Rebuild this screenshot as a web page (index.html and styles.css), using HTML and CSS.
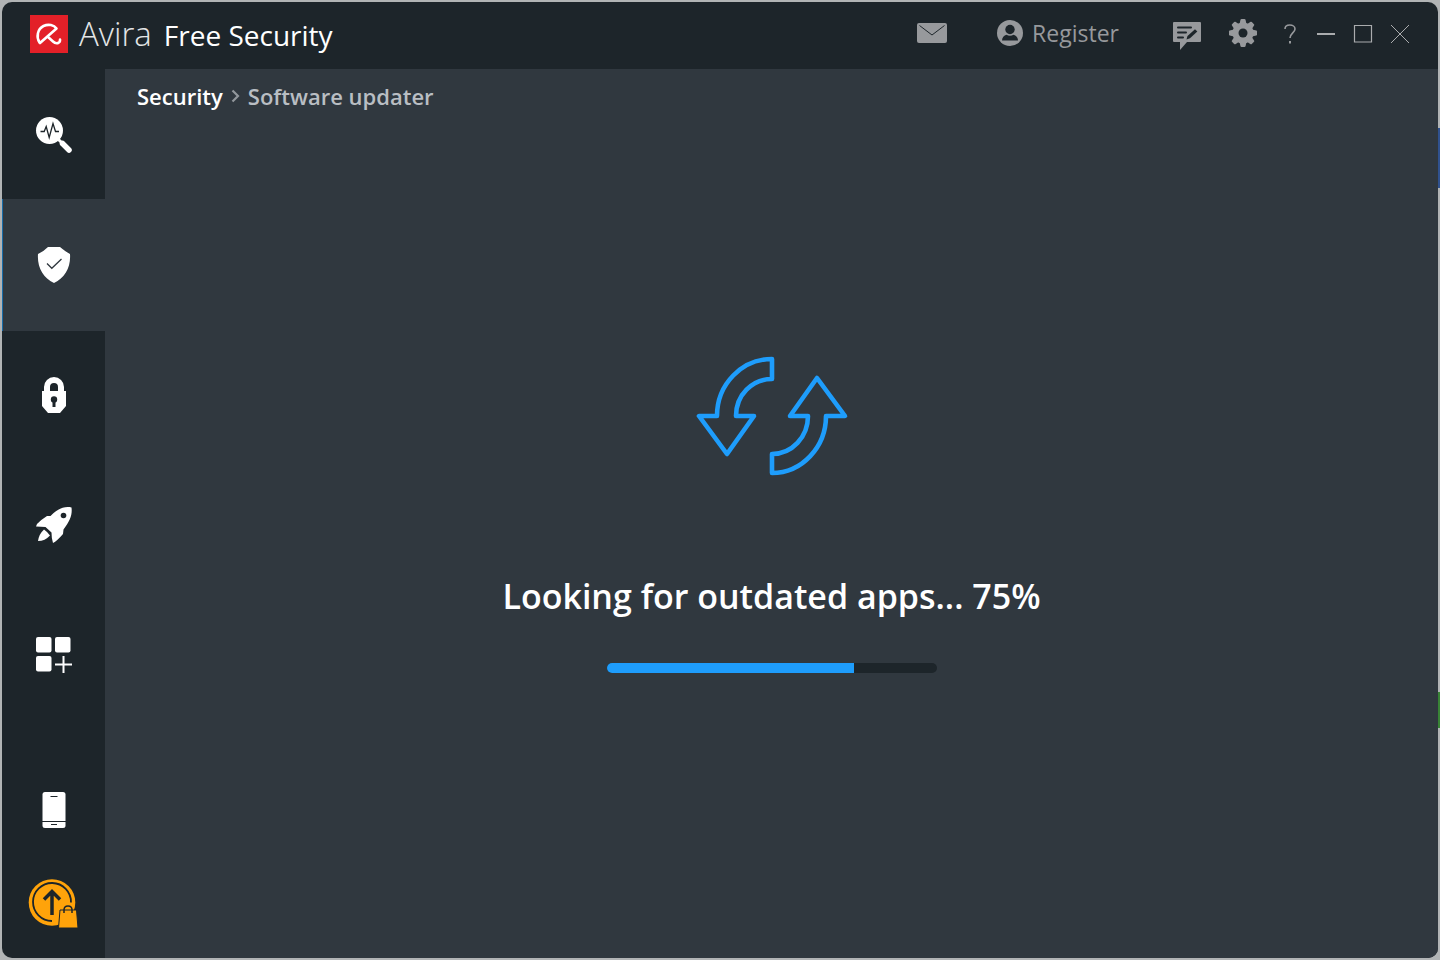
FILE: index.html
```html
<!DOCTYPE html>
<html lang="en">
<head>
<meta charset="utf-8">
<meta name="viewport" content="width=device-width, initial-scale=1">
<title>Avira Free Security</title>
<link rel="stylesheet" href="styles.css">
</head>
<body>
<div class="window">
  <header class="titlebar">
    <div class="brand">
      <svg class="brand-logo" viewBox="0 0 38 38" aria-hidden="true">
        <path fill="#e32028" d="M0 0h38v38H0z"/>
        <path fill="none" stroke="#fff" stroke-width="2.600" stroke-linecap="round" stroke-linejoin="round" d="M9.500 27.500C6 22 7.500 14 13.500 11C18.500 8.700 24 10 26.500 13.500L10 28M17.500 21.500L23 26.500C26 29.500 30.500 28.500 30 24.500"/>
      </svg>
      <span class="brand-name">Avira</span>
      <span class="brand-product">Free Security</span>
    </div>
    <div class="account">
      <button class="tool" type="button" aria-label="Messages">
        <svg width="30" height="20" viewBox="0 0 30 20"><rect width="30" height="20" rx="2" fill="#97999c"/><path d="M2.500 2.500L15 12L27.500 2.500" fill="none" stroke="#1d252a" stroke-width="1"/></svg>
      </button>
      <button class="tool register" type="button">
        <svg width="26" height="26" viewBox="0 0 26 26"><circle cx="13" cy="13" r="13" fill="#97999c"/><circle cx="13" cy="9.500" r="4.700" fill="#1d252a"/><path d="M5 20.500c0-3 2-5.200 4.500-5.800 2 1.500 5 1.500 7 0 2.500.6 4.500 2.800 4.500 5.800z" fill="#1d252a"/></svg>
        <span>Register</span>
      </button>
    </div>
    <div class="tools">
      <button class="tool" type="button" aria-label="Feedback">
        <svg width="28" height="34" viewBox="0 -6 28 34"><path d="M1 0h26a1 1 0 0 1 1 1v18a1 1 0 0 1-1 1H14l-7 8v-8H1a1 1 0 0 1-1-1V1a1 1 0 0 1 1-1z" fill="#97999c"/><path d="M5 5.500h13M5 10.500h8M5 15.500h5" stroke="#1d252a" stroke-width="2" stroke-linecap="round"/><path d="M13.500 17.500l1-3.500 7.500-6.800 2.300 2.300-7.300 6.800z" fill="#1d252a"/></svg>
      </button>
      <button class="tool" type="button" aria-label="Settings">
        <svg width="28" height="28" viewBox="-14 -14 28 28"><g fill="#97999c"><circle r="10.500"/><path id="tooth" d="M-3.500-9l1-4.300q.2-.7 1-.7h3q.8 0 1 .7l1 4.300z"/><use href="#tooth" transform="rotate(45)"/><use href="#tooth" transform="rotate(90)"/><use href="#tooth" transform="rotate(135)"/><use href="#tooth" transform="rotate(180)"/><use href="#tooth" transform="rotate(225)"/><use href="#tooth" transform="rotate(270)"/><use href="#tooth" transform="rotate(315)"/></g><circle r="4.500" fill="#1d252a"/></svg>
      </button>
    </div>
    <div class="controls">
      <button class="tool help" type="button" aria-label="Help">
        <svg width="12" height="20" viewBox="0 0 12 20" fill="none" stroke="#97999c" stroke-width="1.600"><path d="M1 5C1 2.300 3 1 5.800 1S11 2.500 11 5c0 3.500-5 4.500-5 9"/><path d="M6 17v2.500" stroke-width="2"/></svg>
      </button>
      <button class="tool" type="button" aria-label="Minimize">
        <svg width="18" height="18" viewBox="0 0 18 18"><path d="M0 8h18v2H0z" fill="#aaacae"/></svg>
      </button>
      <button class="tool" type="button" aria-label="Maximize">
        <svg width="18" height="18" viewBox="0 0 18 18"><path d="M.5.5h17v16.500H.5z" fill="none" stroke="#aaacae" stroke-width="1.200"/></svg>
      </button>
      <button class="tool" type="button" aria-label="Close">
        <svg width="18" height="18" viewBox="0 0 18 18"><path d="M0 0l18 18M18 0L0 18" fill="none" stroke="#aaacae"/></svg>
      </button>
    </div>
  </header>
  <div class="body">
    <nav class="sidebar" aria-label="Main">
      <button class="nav-item" type="button" aria-label="Status">
        <svg width="36" height="36" viewBox="0 0 36 36"><circle cx="13.500" cy="13.500" r="13.500" fill="#fff"/><path d="M22 22l4 4" stroke="#fff" stroke-width="3"/><path d="M26.500 26.500l6.500 6.500" stroke="#fff" stroke-width="5.500" stroke-linecap="round"/><path d="M4.500 14.500h3.700l2-5 3 11L17 6.500l2.500 8H23" fill="none" stroke="#1d252a" stroke-width="1.300"/></svg>
      </button>
      <button class="nav-item active" type="button" aria-label="Security" aria-current="page">
        <svg width="32" height="36" viewBox="0 0 32 36"><path d="M10 0h12q6 5 10 7c1 13-5 24-16 29C5 31-1 20 0 7q5-2 10-7z" fill="#fff"/><path d="M9 16.500l4.800 4.800L23.500 12" fill="none" stroke="#30383f" stroke-width="1.300"/></svg>
      </button>
      <button class="nav-item" type="button" aria-label="Privacy">
        <svg width="26" height="36" viewBox="0 0 26 36"><path fill="#fff" fill-rule="evenodd" d="M3 14V10a10 10 0 0 1 20 0v4h2v15l-6 7H7l-6-7V14zM9 14h8V10a4 4 0 0 0-8 0z"/><circle cx="13" cy="22.500" r="3.200" fill="#1d252a"/><path d="M11.500 23h3v7h-3z" fill="#1d252a"/></svg>
      </button>
      <button class="nav-item" type="button" aria-label="Performance">
        <svg width="36" height="36" viewBox="0 0 36 36"><path fill="#fff" d="M35.500.5C36.500 8 34 14 27.500 22.500L27 27Q21 34 17 36Q15.500 32 15.500 25.500L9.500 20Q5 19.500 0 19.500L1 17Q6 12 11 9h3.500C21 2 28-1 35.500.5z"/><path fill="#fff" d="M8 22.500Q11 24.500 14 28.500Q9 34 2 34Q3 27 8 22.500z"/><circle cx="27.500" cy="8.500" r="2.800" fill="#1d252a"/></svg>
      </button>
      <button class="nav-item" type="button" aria-label="All apps">
        <svg width="36" height="36" viewBox="0 0 36 36" fill="#fff"><rect width="15.500" height="15.500" rx="2"/><rect x="19" width="15.500" height="15.500" rx="2"/><rect y="19" width="15.500" height="15.500" rx="2"/><path d="M26.500 19h2v7.500H36v2h-7.500V36h-2v-7.500H19v-2h7.500z"/></svg>
      </button>
      <button class="nav-item phone" type="button" aria-label="Mobile">
        <svg width="24" height="36" viewBox="0 0 24 36"><rect x=".5" width="23" height="36" rx="2.500" fill="#fff"/><path d="M0 29.500h24M8.500 4.500h7M9 32.500h6" stroke="#1d252a" stroke-width="1.100"/></svg>
      </button>
      <button class="nav-item upgrade" type="button" aria-label="Upgrade">
        <svg width="50" height="50" viewBox="0 0 50 50"><circle cx="24" cy="23.500" r="23.300" fill="#ffa30a"/><path d="M43 23.500a19 19 0 1 0-19 18.500" fill="none" stroke="#1d252a" stroke-width="1.800"/><path d="M24 36V13M16 20.500l8-8 8 8" fill="none" stroke="#1d252a" stroke-width="3.500"/><path d="M32 31h16.500l1.500 18H30.500z" fill="#ffa30a" stroke="#1d252a" stroke-width="1"/><path d="M36 34v-3q0-4 4-4t4 4v3" fill="none" stroke="#1d252a" stroke-width="1.500"/></svg>
      </button>
    </nav>
    <main class="content">
      <nav class="crumbs" aria-label="Breadcrumb">
        <a href="#security">Security</a>
        <svg width="9" height="14" viewBox="0 0 9 14" aria-hidden="true"><path d="M1.500 1.500L7 7l-5.500 5.500" fill="none" stroke="#92979c" stroke-width="2.200"/></svg>
        <span>Software updater</span>
      </nav>
      <section class="scan">
        <svg class="scan-icon" width="152" height="120" viewBox="0 0 152 120" fill="none" stroke="#1e9dfc" stroke-width="4.600" stroke-linejoin="round" aria-hidden="true"><path d="M76 3V23C56 23 40 39 40 60H58L31 98 3 60H21C21 28 46 3 76 3z"/><path d="M76 117V98C96 98 112 81 112 60H94L121 22 149 60H130C130 91 106 117 76 117z"/></svg>
        <label class="scan-label" for="scan-progress">Looking for outdated apps... 75%</label>
        <progress class="scan-bar" id="scan-progress" value="75" max="100">75%</progress>
      </section>
    </main>
  </div>
</div>
</body>
</html>
```
FILE: styles.css
```css
* {
  box-sizing: border-box;
}

body {
  margin: 0;
  min-height: 100vh;
  padding: 2px;
  display: flex;
  background:
    linear-gradient(#30528f, #30528f) right 128px / 2px 60px no-repeat,
    linear-gradient(#398436, #398436) right 692px / 2px 36px no-repeat,
    #b1b4b5;
  color: #fff;
  font-family: "Open Sans", "Noto Sans", sans-serif;
}

button {
  margin: 0;
  padding: 0;
  border: 0;
  background: none;
  color: inherit;
  font: inherit;
  cursor: pointer;
}

svg {
  display: block;
  overflow: visible;
}

.window {
  flex: 1;
  display: flex;
  flex-direction: column;
  overflow: hidden;
  border-radius: 10px;
  background: #1d252a;
}

.titlebar {
  height: 67px;
  display: flex;
  align-items: center;
  padding: 0 29px 4px 28px;
}

.brand {
  display: flex;
  align-items: center;
  margin-right: auto;
  line-height: 40px;
  white-space: nowrap;
}

.brand-logo {
  width: 38px;
  height: 38px;
  margin-right: 11px;
}

.brand-name {
  margin-right: 12px;
  font-size: 33px;
  font-weight: 300;
  color: #e4e6e7;
}

.brand-product {
  padding-top: 3px;
  font-size: 28px;
}

.account {
  display: flex;
  align-items: center;
  gap: 50px;
  margin-right: 54px;
  padding-bottom: 2px;
}

.tool {
  display: flex;
  align-items: center;
}

.register {
  gap: 9px;
  font-size: 23px;
  line-height: 32px;
  color: #97999c;
}

.tools {
  display: flex;
  align-items: center;
  gap: 28px;
  margin-right: 27px;
  padding-bottom: 2px;
}

.controls {
  display: flex;
  align-items: center;
  gap: 19px;
}

.help {
  margin-right: 2px;
}

.body {
  flex: 1;
  display: flex;
}

.sidebar {
  width: 103px;
  padding-top: 1px;
  display: flex;
  flex-direction: column;
}

.nav-item {
  height: 130px;
  display: flex;
  align-items: center;
  justify-content: center;
}

.nav-item.active {
  height: 132px;
  margin: -1px 0;
  border-left: 1px solid #176ca8;
  background: #30383f;
}

.nav-item.phone {
  height: 80px;
  margin-top: auto;
}

.nav-item.upgrade {
  height: 108px;
  padding-right: 2px;
}

.content {
  flex: 1;
  display: flex;
  flex-direction: column;
  background: #30383f;
}

.crumbs {
  display: flex;
  align-items: center;
  gap: 8px;
  padding: 11px 32px;
  font-size: 22px;
  font-weight: 600;
  line-height: 32px;
  color: #b9bec3;
}

.crumbs a {
  color: #fff;
  text-decoration: none;
}

.scan {
  flex: 1;
  display: flex;
  flex-direction: column;
  align-items: center;
  justify-content: center;
  padding-bottom: 52px;
}

.scan-label {
  margin: 96px 0 43px;
  font-size: 34px;
  font-weight: 600;
  line-height: 48px;
}

.scan-bar {
  appearance: none;
  width: 330px;
  height: 10px;
  border: 0;
  border-radius: 5px;
  overflow: hidden;
  background: #1d252a;
}

.scan-bar::-webkit-progress-bar {
  background: #1d252a;
}

.scan-bar::-webkit-progress-value {
  background: #1e9dfc;
}
```
